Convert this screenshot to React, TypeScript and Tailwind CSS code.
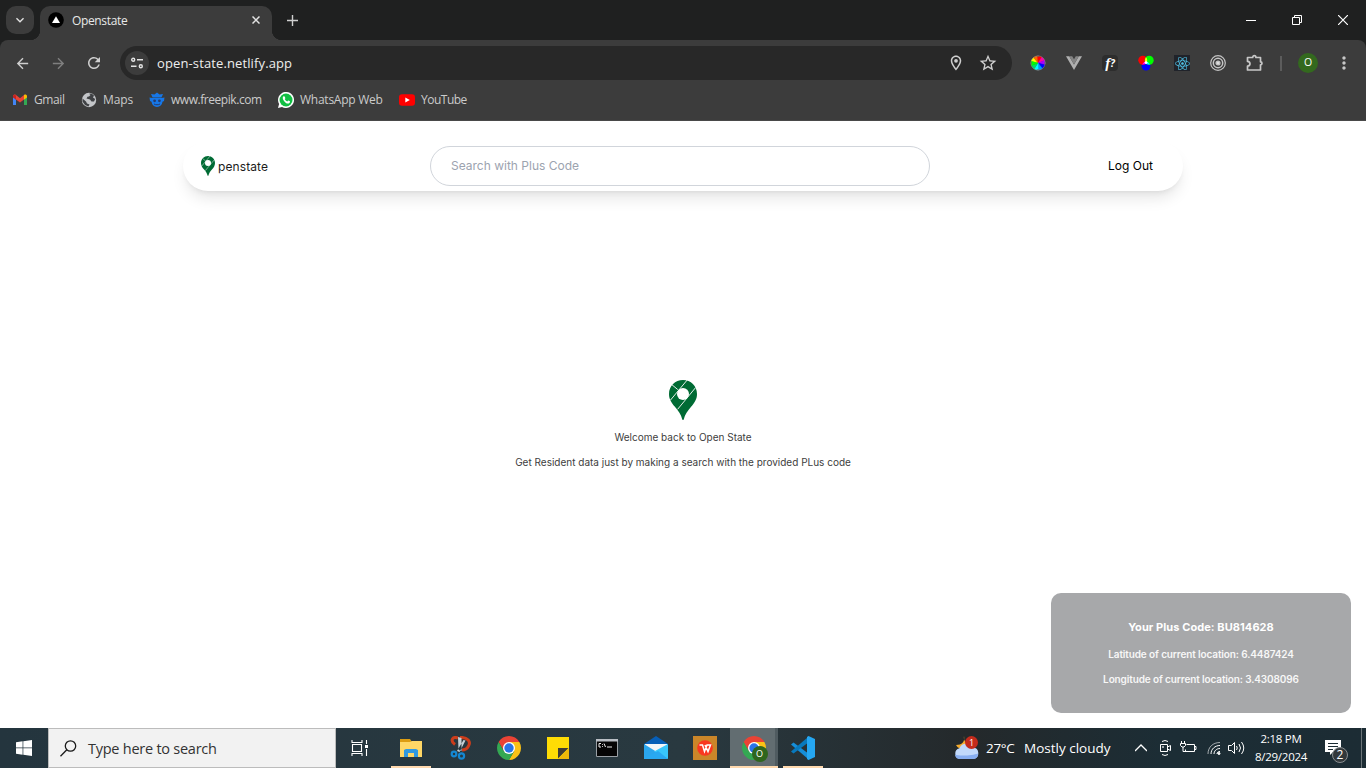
import React from "react";
import {
  MdArrowBack,
  MdArrowForward,
  MdRefresh,
  MdOutlineLocationOn,
  MdStarOutline,
  MdMoreVert,
  MdKeyboardArrowDown,
} from "react-icons/md";
import { FaReact } from "react-icons/fa";

const Pin = ({ className }: { className: string }) => (
  <svg className={className} viewBox="0 0 28 40" fill="none">
    <path
      d="M14 0C6.1 0 0 6.2 0 13.9c0 5.2 2.5 8.800 5.700 12.700C9.500 31 12 34.500 13.200 39.200c.2 1.100 1.400 1.100 1.600 0C16 34.500 18.500 31 22.300 26.600 25.500 22.700 28 19.100 28 13.900 28 6.200 21.900 0 14 0Z"
      fill="#006b34"
    />
    <path d="M3 4.800 8.800 9.600M18.200 0 1.400 20.200M26.600 7.600 8.600 29.300" stroke="#fff" strokeWidth="0.9" />
    <circle cx="14" cy="14" r="6" fill="#fff" />
  </svg>
);

const ChromeLogo = ({ className }: { className: string }) => (
  <svg className={className} viewBox="2 2 44 44">
    <path d="M4.950 13A22 22 0 0 1 43.050 13H24V24L14.470 29.500Z" fill="#ea4335" />
    <path d="M43.050 13A22 22 0 0 1 24 46L33.530 29.500 24 24V13Z" fill="#fbc116" />
    <path d="M24 46A22 22 0 0 1 4.950 13L14.470 29.500 24 24 33.530 29.500Z" fill="#34a853" />
    <circle cx="24" cy="24" r="11" fill="#fff" />
    <circle cx="24" cy="24" r="8.600" fill="#2a74e8" />
  </svg>
);

const TabStrip = () => (
  <div className="flex h-10 items-end bg-[#1f2020]">
    <div className="mb-1.5 ml-1.5 flex h-7 w-7 items-center justify-center rounded-[10px] bg-[#3c3c3c]">
      <MdKeyboardArrowDown className="h-4 w-4 text-[#e3e3e3]" />
    </div>
    <div className="-ml-1 h-2.5 w-2.5 bg-[radial-gradient(circle_at_0_0,transparent_10px,#3c3c3c_10.5px)]" />
    <div className="flex h-[34px] w-[232px] items-center rounded-t-[10px] bg-[#3c3c3c] pr-3 pb-1.5 pl-2">
      <svg className="h-4 w-4" viewBox="0 0 16 16">
        <circle cx="8" cy="8" r="7.800" fill="#000" />
        <path d="M8 4.200 12 11H4Z" fill="#fff" />
      </svg>
      <span className="mt-0.5 ml-2 text-[12px] tracking-[-0.35px] text-[#e8e8e8]">Openstate</span>
      <svg className="ml-auto h-2 w-2" viewBox="0 0 8 8"><path d="M.5.5l7 7M7.500.5l-7 7" stroke="#e3e3e3" strokeWidth="1.500" /></svg>
    </div>
    <div className="h-2.5 w-2.5 bg-[radial-gradient(circle_at_100%_0,transparent_10px,#3c3c3c_10.5px)]" />
    <div className="flex h-10 w-5 items-center justify-center">
      <svg className="h-[11px] w-[11px]" viewBox="0 0 11 11"><path d="M5.500 0v11M0 5.500h11" stroke="#cfcfcf" strokeWidth="1.400" /></svg>
    </div>
    <div className="ml-auto flex h-10 items-center">
      <div className="flex w-[46px] justify-center">
        <svg className="h-[10px] w-[10px]" viewBox="0 0 10 10"><path d="M0 5.500H10" stroke="#fff" /></svg>
      </div>
      <div className="flex w-[46px] justify-center">
        <svg className="h-[10px] w-[10px]" viewBox="0 0 10 10" fill="none" stroke="#fff">
          <path d="M.5 2.500h7v7h-7zM2.500 2.500v-2h7v7h-2" />
        </svg>
      </div>
      <div className="flex w-[46px] justify-center">
        <svg className="h-[10px] w-[10px]" viewBox="0 0 10 10"><path d="M0 0 10 10M10 0 0 10" stroke="#fff" strokeWidth="1.200" /></svg>
      </div>
    </div>
  </div>
);

const wheel = ["#ff0", "#f60", "#f00", "#f0a", "#a0f", "#00f", "#09f", "#0ff", "#0d6", "#0f0"];

const extensions: React.ReactNode[] = [
  <svg key="wheel" className="h-4 w-4" viewBox="-8 -8 16 16">
    <circle r="7" fill="none" stroke="#999" strokeWidth=".8" />
    {wheel.map((c, i) => (
      <path key={c} d="M0 0 0-6.800A6.800 6.800 0 0 1 4-5.500Z" fill={c} stroke={c} strokeWidth=".3" transform={`rotate(${i * 36 - 75})`} />
    ))}
    <path d="M0-8v2M0 8V6M-8 0h2M8 0H6" stroke="#666" />
  </svg>,
  <svg key="vue" className="h-4 w-4" viewBox="0 0 16 16">
    <path d="M0 1.200h3.200L8 9.500l4.800-8.300H16L8 15Z" fill="#b0b0b0" />
    <path d="M3.200 1.200h3L8 4.300l1.800-3.100h3L8 9.500Z" fill="#858585" />
  </svg>,
  <div key="font" className="flex h-4 w-4 items-center justify-center rounded-sm bg-[#2d2d2d] font-['Liberation_Serif',serif] text-[15px] leading-4 font-bold text-white italic">
    f<span className="font-['Open_Sans',sans-serif] text-[10px]">?</span>
  </div>,
  <svg key="rgb" className="h-4 w-4" viewBox="0 0 16 16">
    <circle cx="8" cy="11" r="4.500" fill="#00f" />
    <circle cx="4.800" cy="5.200" r="4.500" fill="#f00" />
    <circle cx="11.200" cy="5.200" r="4.500" fill="#0f0" />
    <path d="M8 2.200c1.300 1.300 1.500 3.500.8 5L8 8.500C6.600 6.500 6.700 4 8 2.200Z" fill="#ff0" />
    <path d="M8 9 4.200 9.600C5.200 7 7 6.400 8 6.700Z" fill="#f0f" />
    <path d="M8 9l3.800.7C11 7 9.500 6.500 8 6.700Z" fill="#0ff" />
    <circle cx="8" cy="7.600" r="1.400" fill="#fff" />
  </svg>,
  <div key="react" className="flex h-4 w-4 items-center justify-center bg-[#20232a]">
    <FaReact className="h-[15px] w-[15px] text-[#4fc3e8]" />
  </div>,
  <svg key="target" className="h-4 w-4" viewBox="0 0 16 16" fill="none" stroke="#c4c4c4" strokeWidth="1.200">
    <circle cx="8" cy="8" r="7.300" />
    <circle cx="8" cy="8" r="4.700" strokeWidth="1.500" />
    <circle cx="8" cy="8" r="2" fill="#ddd" />
  </svg>,
  <svg key="puzzle" className="h-[18px] w-[18px]" viewBox="0 0 18 18" fill="none" stroke="#c7c7c7" strokeWidth="1.700" strokeLinejoin="round">
    <path d="M2.500 3.500h5.200c0-2.600 3.200-2.600 3.200 0h4.600v4.300c2 0 2 3 0 3V16h-13v-3.800c3.300-.3 3.300-4.500 0-4.800Z" />
  </svg>,
];

const Toolbar = () => (
  <div className="flex h-[46px] items-center">
    <div className="ml-1 flex w-9 justify-center"><MdArrowBack className="h-[17px] w-[17px] text-[#cfcfcf]" /></div>
    <div className="flex w-9 justify-center"><MdArrowForward className="h-[17px] w-[17px] text-[#7f7f7f]" /></div>
    <div className="flex w-9 justify-center"><MdRefresh className="h-[18px] w-[18px] text-[#cfcfcf]" /></div>
    <div className="ml-2 flex h-[34px] w-[892px] items-center rounded-full bg-[#282828] pl-[5px]">
      <div className="flex h-6 w-6 items-center justify-center rounded-full bg-[#3c3c3c]">
        <svg className="h-3 w-3" viewBox="0 0 12 12" fill="none" stroke="#e3e3e3" strokeWidth="1.400">
          <circle cx="2.200" cy="2.800" r="1.500" />
          <path d="M6 2.800h6M0 9.200h5.500" />
          <circle cx="9.800" cy="9.200" r="1.500" />
        </svg>
      </div>
      <span className="mt-0.5 ml-2 text-[13px] tracking-[0.12px] text-[#eeeeee]">open-state.netlify.app</span>
      <MdOutlineLocationOn className="ml-auto h-[18px] w-[18px] text-[#cfcfcf]" />
      <MdStarOutline className="mr-[14px] ml-[13px] h-5 w-5 text-[#cfcfcf]" />
    </div>
    <div className="ml-2 flex">
      {extensions.map((icon, i) => (
        <div key={i} className="flex h-9 w-9 items-center justify-center">{icon}</div>
      ))}
    </div>
    <div className="ml-2 h-[15px] w-0.5 bg-[#5c5c5c]" />
    <div className="ml-4 flex h-5 w-5 items-center justify-center rounded-full bg-[#33691e] text-[10.5px] text-white">O</div>
    <MdMoreVert className="ml-4 h-5 w-5 text-[#c7c7c7]" />
  </div>
);

const Bookmarks = () => (
  <div className="flex h-7 items-center text-[12px] text-[#cbcbcb]">
    <div className="ml-3 flex w-[69px] items-center">
      <svg className="h-4 w-4" viewBox="0 0 16 16">
        <path d="M1 4.500V13h3V7.500Z" fill="#4285f4" />
        <path d="M15 4.500V13h-3V7.500Z" fill="#34a853" />
        <path d="M1 4.500C1 2.500 3 2.200 4 3l4 3.200L12 3v4.500l-4 3-4-3Z" fill="#ea4335" />
        <path d="M12 3c1.200-.8 3-.4 3 1.500v1L12 7.800Z" fill="#fbbc04" />
        <path d="M1 4.500C1 3.500 1.500 3 2.200 2.700L4 3.500v4L1 5.500Z" fill="#c5221f" />
      </svg>
      <span className="ml-1.5 tracking-[-0.4px] whitespace-nowrap">Gmail</span>
    </div>
    <div className="flex w-[68px] items-center">
      <svg className="h-4 w-4" viewBox="0 0 16 16">
        <circle cx="8" cy="8" r="7.200" fill="#c3c5c8" />
        <path d="M8 1.800 9.500 3 8 4.500 6.500 4.800 5.500 6.500 9 7.500 10.500 9.500H13L14.200 7 12 5.500 13 3.500 10.500 1.500ZM1.500 6.500 5 9.500 6 11.500 8.500 12.500 7.500 14.500 4 13 1.500 9.500Z" fill="#3f4144" />
      </svg>
      <span className="ml-1.5 tracking-[-0.1px] whitespace-nowrap">Maps</span>
    </div>
    <div className="flex w-[129px] items-center">
      <svg className="h-4 w-4" viewBox="0 0 16 16">
        <path d="M2 2 5.500 2.500 8 .5l2.500 2L14 2l-1.500 3.500h-9Z" fill="#1677e8" />
        <path d="M.5 5.500c3 .8 12 .8 15 0L15 9l-1.500.8C13 13 11 15 8 15s-5-2-5.500-5.200L1 9Z" fill="#1677e8" />
        <circle cx="5.600" cy="8.800" r="1.400" fill="#263c6c" />
        <circle cx="10.400" cy="8.800" r="1.400" fill="#263c6c" />
        <path d="M5 12c1.500 1 4.500 1 6 0" stroke="#263c6c" fill="none" />
      </svg>
      <span className="ml-[6px] tracking-[-0.45px] whitespace-nowrap">www.freepik.com</span>
    </div>
    <div className="flex w-[121px] items-center">
      <svg className="h-4 w-4" viewBox="0 0 16 16">
        <path d="M0 16 1.100 12A8 8 0 1 1 4 14.900Z" fill="#fff" />
        <circle cx="8" cy="8" r="6.500" fill="#12bf43" />
        <path d="M5.500 4.200c-1.200 1-.9 2.700.5 4.700s3.300 3 4.800 2.500 1.500-2 .8-2.300l-1.400-.6-.9 1c-1.300-.5-2-1.300-2.600-2.400l.7-.9-.7-1.800Z" fill="#fff" />
      </svg>
      <span className="ml-[6px] tracking-[-0.25px] whitespace-nowrap">WhatsApp Web</span>
    </div>
    <div className="flex items-center">
      <svg className="h-4 w-4" viewBox="0 0 16 16">
        <rect x="0" y="2.300" width="16" height="11.500" rx="3" fill="#f00" />
        <path d="M6.300 5.600 10.800 8l-4.500 2.500Z" fill="#fff" />
      </svg>
      <span className="ml-[6px] tracking-[-0.5px] whitespace-nowrap">YouTube</span>
    </div>
  </div>
);

const Page = () => (
  <main className="flex h-[607px] flex-col items-center bg-white font-['Inter',sans-serif]">
    <nav className="mt-5 flex h-[50px] w-[1000px] items-center rounded-full bg-white pl-[18px] shadow-[0_10px_15px_-3px_rgba(0,0,0,0.1),0_4px_6px_-4px_rgba(0,0,0,0.1)]">
      <div className="flex w-[229px] items-center">
        <Pin className="h-5 w-[14px]" />
        <span className="mt-0.5 ml-[3px] text-[12px] leading-4 tracking-[0.1px] text-[#1c1c1c]">penstate</span>
      </div>
      <div className="flex h-10 w-[500px] items-center rounded-full border border-[#d1d5db] pl-5 text-[12px] text-[#9ca3af]">
        Search with Plus Code
      </div>
      <span className="mr-[30px] ml-auto text-[12px] text-black">Log Out</span>
    </nav>
    <section className="mt-[189px] flex flex-col items-center text-[10px] leading-[15px] text-[#404040]">
      <Pin className="h-10 w-7" />
      <p className="mt-[10px]">Welcome back to Open State</p>
      <p className="mt-[10px]">Get Resident data just by making a search with the provided PLus code</p>
    </section>
    <aside className="mt-auto mr-[15px] mb-[15px] flex h-[120px] w-[300px] flex-col items-center self-end rounded-[10px] bg-[#a7a8aa] pt-[26px] text-[10px] leading-[15px] font-semibold text-[#f7f7f7]">
      <p className="text-[11px] leading-4 font-bold tracking-[0.08px] text-white">Your Plus Code: BU814628</p>
      <p className="mt-[12px] tracking-[-0.12px]">Latitude of current location: 6.4487424</p>
      <p className="mt-[10px] tracking-[-0.12px]">Longitude of current location: 3.4308096</p>
    </aside>
  </main>
);

const apps: { icon: React.ReactNode; open?: boolean; active?: boolean }[] = [
  {
    open: true,
    icon: (
      <svg className="h-6 w-6" viewBox="0 0 24 24">
        <path d="M1 3h10l2 3v4H1Z" fill="#dd9d12" />
        <path d="M1 6h10l2-1h10v16H1Z" fill="#ffd766" />
        <path d="M5 21v-7l2-1h10l2 1v7h-4v-4H9v4Z" fill="#3199df" />
      </svg>
    ),
  },
  {
    icon: (
      <svg className="h-6 w-6" viewBox="0 0 24 24" fill="none">
        <path d="M10 2C4 0 2 5 7 8.500M12 1.500C20 1 23 6 20.500 10c-1.500 3-4 4-6.500 4" stroke="#cc3d1b" strokeWidth="3" />
        <path d="M10 1l3.500 1v13l-3-1ZM17.500 4.500l-2-.5L9 15l2.500 1Z" fill="#c6d0d5" />
        <circle cx="6" cy="18" r="2.300" stroke="#1587d1" strokeWidth="2.200" />
        <circle cx="13.500" cy="20" r="2.600" stroke="#1587d1" strokeWidth="2.200" />
      </svg>
    ),
  },
  { icon: <ChromeLogo className="h-6 w-6" /> },
  {
    icon: (
      <svg className="h-6 w-6" viewBox="0 0 24 24">
        <path d="M1 1h22v22H1Z" fill="#fedc05" />
        <path d="M12 12h10.500L12 22.500Z" fill="#3f3d35" />
        <path d="M23 12v11H12Z" fill="#efb90a" />
      </svg>
    ),
  },
  {
    icon: (
      <svg className="h-6 w-6" viewBox="0 0 24 24">
        <path d="M1.500 3.500h21v17h-21Z" fill="#050505" stroke="#9aa0a5" />
        <path d="M1 3h22v2.500H1Z" fill="#b9bec4" />
        <path d="M6 7.500H4V11h2M7.500 8v.8M7.500 10v.8M9 7.500l1.500 3.500M12 11h5" stroke="#eee" fill="none" />
      </svg>
    ),
  },
  {
    icon: (
      <svg className="h-6 w-6" viewBox="0 0 24 24">
        <path d="M0 8 12 0l12 8v6H0Z" fill="#075fb8" />
        <path d="M1 8h22v6l-11 4L1 14Z" fill="#f4f6f8" />
        <path d="M0 8v15h24Z" fill="#2ba6ee" />
        <path d="M24 8v15L10 15.500Z" fill="#38c6fb" />
        <path d="M0 23 14 15l10 8Z" fill="#29a9f2" />
      </svg>
    ),
  },
  {
    icon: (
      <svg className="h-6 w-6" viewBox="0 0 24 24">
        <path d="M0 0h24v24H0Z" fill="#cb8629" />
        <circle cx="12" cy="12" r="7.800" fill="#f93820" />
        <path d="M6.500 9h3l2 6.500L14 9h3.500L15 15.500 12 9" fill="none" stroke="#fff" strokeWidth="1.500" />
      </svg>
    ),
  },
  {
    open: true,
    active: true,
    icon: (
      <div className="relative h-6 w-6">
        <ChromeLogo className="h-6 w-6" />
        <span className="absolute top-[10px] left-[10px] flex h-4 w-4 items-center justify-center rounded-full bg-[#2f661d] text-[9px] text-white">O</span>
      </div>
    ),
  },
  {
    open: true,
    icon: (
      <svg className="h-6 w-6" viewBox="0 0 24 24">
        <path d="M0 8.500 2.500 6.500 18 18v5.800Z" fill="#168ed8" />
        <path d="M0 15.500 2.500 17.500 18 6V.2Z" fill="#0879bd" />
        <path d="M17.500 0 24 3v18l-6.500 3-1.500-1V1Z" fill="#25a7f2" />
      </svg>
    ),
  },
];

const Taskbar = () => (
  <footer className="flex h-10 bg-[linear-gradient(90deg,#24353e,#293940_50%,#24292b_71%,#1c2d35_85%,#1c2c34)]">
    <div className="flex w-12 items-center justify-center">
      <svg className="h-4 w-4" viewBox="0 0 16 16" fill="#fff">
        <path d="M0 2.200 6.600 1.300V7.600H0ZM7.300 1.200 16 0V7.600H7.300ZM0 8.300H6.600V14.700L0 13.800ZM7.300 8.300H16V16L7.300 14.800Z" />
      </svg>
    </div>
    <div className="flex w-72 items-center border border-[#bcbcbc] bg-[#f2f2f2] pl-[11px]">
      <svg className="h-[17px] w-[17px]" viewBox="0 0 17 17" fill="none" stroke="#1a1a1a" strokeWidth="1.300">
        <circle cx="10.500" cy="6" r="5.200" />
        <path d="M6.800 9.800.5 16.300" />
      </svg>
      <span className="mt-0.5 ml-[11px] text-[14.5px] tracking-[-0.25px] text-[#333]">Type here to search</span>
    </div>
    <div className="flex w-[50px] items-center justify-center">
      <svg className="mr-0.5 h-6 w-6" viewBox="0 0 24 24" fill="none" stroke="#fff" strokeWidth="1.100">
        <path d="M4.500 8.500h9v7h-9zM4 4v2.500h10V4M4 20v-2.500h10V20M18.500 4v4M18.500 13v7" />
        <path d="M17 9h3v3h-3z" fill="#fff" stroke="none" />
      </svg>
    </div>
    {apps.map((app, i) => (
      <div
        key={i}
        className={
          app.active
            ? "ml-px flex w-12 flex-col items-center justify-between border-r-[3px] border-[#4f5b60] bg-[#626d71] pt-2 pl-0.5"
            : "flex w-[49px] flex-col items-center justify-between pt-2"
        }
      >
        {app.icon}
        <div className={app.open ? (app.active ? "-mr-[3px] -ml-0.5 h-0.5 self-stretch bg-[#ffd9ae]" : "h-0.5 w-10 bg-[#ffd9ae]") : "h-0.5"} />
      </div>
    ))}
    <div className="ml-auto flex items-center text-white">
      <div className="relative h-6 w-[26px]">
        <svg className="h-6 w-[26px]" viewBox="0 0 26 24">
          <path d="M10 0c1 6-2 9-8 9 3 6 14 6 17-1C13 9 9 5 10 0Z" fill="#f5ab2d" />
          <path d="M6 23a5.500 5.500 0 0 1-.5-10.800A7.500 7.500 0 0 1 19 11.500 5.800 5.800 0 0 1 19.500 23Z" fill="#c2d9fa" />
          <path d="M1 18.500c4 2 18 1 23-1A5.300 5.300 0 0 1 19.500 23H6a5 5 0 0 1-5-4.500Z" fill="#88aef0" />
        </svg>
        <span className="absolute top-0 left-[11px] flex h-[13px] w-[13px] items-center justify-center rounded-full bg-[#c42b1c] text-[9px]">1</span>
      </div>
      <span className="ml-[6px] w-[38px] text-[13.5px] tracking-[-0.3px] whitespace-nowrap">27°C</span>
      <span className="w-[98px] text-[13.5px] whitespace-nowrap">Mostly cloudy</span>
      <svg className="ml-[13px] h-3 w-3" viewBox="0 0 12 12" fill="none" stroke="#fff" strokeWidth="1.300"><path d="m0 9 6-6 6 6" /></svg>
      <svg className="ml-[12px] h-4 w-3" viewBox="0 0 12 16" fill="none" stroke="#fff"><path d="M3 1.500Q6-.5 9 1.500M3 14.500q3 2 6 0M1.500 4.500h7v7h-7zM8.500 7l3-1.500v5l-3-1.500" /><circle cx="4" cy="7" r=".5" /></svg>
      <svg className="ml-[9px] h-4 w-[18px]" viewBox="0 0 18 16" fill="none" stroke="#fff"><path d="M6.500 4.500h8v7h-9V9.500M14.500 6.500H16v3h-1.500M1.500 1v2.500M4.500 1v2.500M.5 3.500h5v2L4 7H2L.5 5.500zM3 7v4.500h3" /></svg>
      <svg className="ml-[9px] h-4 w-[14px]" viewBox="0 0 14 16" fill="none" stroke="#fff"><path d="M1 14C1 7 6 2.500 13 2.500" opacity=".6" /><path d="M4 14c0-5 4-8.500 9-8.500M7 14c0-3 2.500-5.500 6-5.500M10 14c0-1.500 1-2.500 3-2.500" /><circle cx="12" cy="13.500" r="1" fill="#fff" /></svg>
      <svg className="ml-[7px] h-4 w-[17px]" viewBox="0 0 17 16" fill="none" stroke="#fff"><path d="M.5 5.500h3l3-3v11l-3-3h-3zM8.500 6q1.500 2 0 4M11 4q3 4 0 8M13.500 2q4.500 6 0 12" /></svg>
      <div className="ml-[7px] flex w-[58px] flex-col items-center text-[11.5px] leading-[18px] tracking-[-0.25px] whitespace-nowrap">
        <span>2:18 PM</span>
        <span>8/29/2024</span>
      </div>
      <div className="relative ml-[15px] h-6 w-7">
        <svg className="h-6 w-4" viewBox="0 0 16 24"><path d="M0 4h16v12H8l-3 3v-3H0Z" fill="#fff" /><path d="M3 7.500h10M3 10.500h10M3 13.500h5" stroke="#1c2c34" /></svg>
        <span className="absolute top-[11px] left-[7px] flex h-4 w-4 items-center justify-center rounded-full border border-[#8a8f92] bg-[#32383b] text-[12px]">2</span>
      </div>
      <div className="ml-2 h-10 w-[5px] border-l border-[#6b7478]" />
    </div>
  </footer>
);

export default function App() {
  return (
    <div className="flex h-[768px] w-[1366px] flex-col overflow-hidden bg-[#1f2020] font-['Open_Sans','Noto_Sans',sans-serif]">
      <TabStrip />
      <header className="h-[81px] rounded-t-[8px] border-b border-[#494949] bg-[#3c3c3c]">
        <Toolbar />
        <Bookmarks />
      </header>
      <Page />
      <Taskbar />
    </div>
  );
}
